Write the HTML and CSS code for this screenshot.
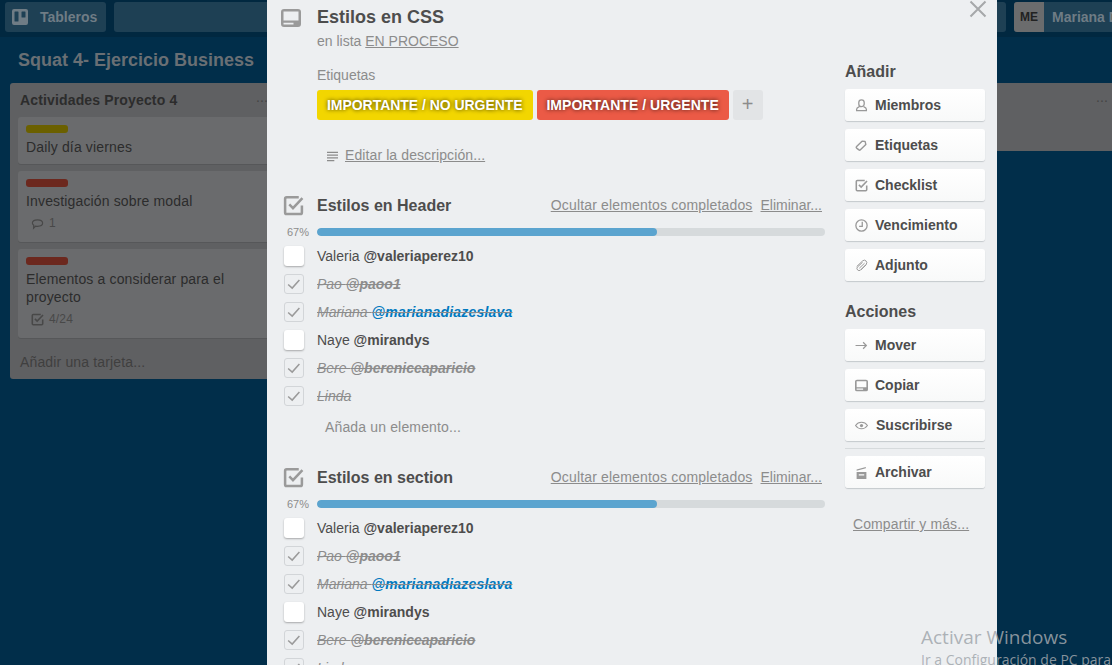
FILE: index.html
```html
<!DOCTYPE html>
<html lang="en">
<head>
    <meta charset="UTF-8">
    <meta name="viewport" content="width=device-width, initial-scale=1.0">
    <title>Estilos en CSS</title>
    <link rel="stylesheet" href="styles.css">
</head>
<body>
    <svg class="defs" width="0" height="0">
        <symbol id="i-card" viewBox="0 0 20 20">
            <path d="M3 1h14a3 3 0 0 1 3 3v12a3 3 0 0 1-3 3H3a3 3 0 0 1-3-3V4a3 3 0 0 1 3-3zm-.5 2.500v9h15v-9h-15zm0 11.300v1.700h10v-1.700h-10z" fill-rule="evenodd"/>
        </symbol>
        <symbol id="i-check" viewBox="0 0 20 20">
            <path d="M15 2.200H3.500a1.500 1.500 0 0 0-1.500 1.500v13a1.500 1.500 0 0 0 1.500 1.500h13a1.500 1.500 0 0 0 1.500-1.500V10" fill="none" stroke="currentColor" stroke-width="2.400"/>
            <path d="M6 9l3.500 3.500L18.500 3" fill="none" stroke="currentColor" stroke-width="2.400"/>
        </symbol>
        <symbol id="i-tick" viewBox="0 0 20 20">
            <path d="M3.500 10.500l4.500 4L16 5.500" fill="none" stroke="currentColor" stroke-width="1.700"/>
        </symbol>
        <symbol id="i-user" viewBox="0 0 12 12">
            <path d="M6 .8a2.500 2.500 0 0 1 2.500 2.500v1.200A2.500 2.500 0 0 1 6 7 2.500 2.500 0 0 1 3.500 4.500V3.300A2.500 2.500 0 0 1 6 .8zM4 7C2.500 7.700 1.500 8.300 1.500 9.500v1.300h9V9.500C10.500 8.300 9.500 7.700 8 7" fill="none" stroke="currentColor" stroke-width="1.200"/>
        </symbol>
        <symbol id="i-tag" viewBox="0 0 12 12">
            <path d="M1.500 7l5-5 2.800.2.700 2.800-5 5a1 1 0 0 1-1.400 0L1.500 8.400a1 1 0 0 1 0-1.400z" fill="none" stroke="currentColor" stroke-width="1.300" stroke-linejoin="round"/>
        </symbol>
        <symbol id="i-clock" viewBox="0 0 12 12">
            <circle cx="6" cy="6" r="5.200" fill="none" stroke="currentColor" stroke-width="1.200"/>
            <path d="M6.700 2.600V6.800H3.800" fill="none" stroke="currentColor" stroke-width="1.200"/>
        </symbol>
        <symbol id="i-clip" viewBox="0 0 12 12">
            <path d="M1.500 7L7 1.800a2.200 2.200 0 0 1 3.200 3.200L5 10.300A2 2 0 0 1 2.200 7.500L7 3M4 8.500l4.800-4.600M5.500 10l5-4.800" fill="none" stroke="currentColor" stroke-width=".9"/>
        </symbol>
        <symbol id="i-arrow" viewBox="0 0 12 12">
            <path d="M.5 6h10M7.500 3l3 3-3 3" fill="none" stroke="currentColor" stroke-width="1.100"/>
        </symbol>
        <symbol id="i-eye" viewBox="0 0 12 12">
            <path d="M.5 6C2 3.800 4 3 6 3s4 .8 5.500 3C10 8.200 8 9 6 9s-4-.8-5.500-3z" fill="none" stroke="currentColor" stroke-width="1"/>
            <circle cx="6" cy="6" r="1.500" fill="currentColor"/>
        </symbol>
        <symbol id="i-archive" viewBox="0 0 12 12">
            <path d="M1.500 5.500h9V12h-9zM3.500 7.500v1.200h5V7.500zM1.500 3.200L10 1v1.100L1.500 4.300z" fill-rule="evenodd"/>
        </symbol>
        <symbol id="i-desc" viewBox="0 0 14 12">
            <path d="M1 1.500h12M1 4.500h12M1 7.500h12M1 10.500h8" fill="none" stroke="currentColor" stroke-width="1.300"/>
        </symbol>
    </svg>

    <div class="page">
        <div class="topbar">
            <div class="topbtn">
                <svg class="board-ico" viewBox="0 0 16 16"><path d="M2 0h12a2 2 0 0 1 2 2v12a2 2 0 0 1-2 2H2a2 2 0 0 1-2-2V2a2 2 0 0 1 2-2zm1 2.500a.5.500 0 0 0-.5.500v9a.5.500 0 0 0 .5.500h3a.5.500 0 0 0 .5-.5V3a.5.500 0 0 0-.5-.5zm7 0a.5.500 0 0 0-.5.500v5a.5.500 0 0 0 .5.500h3a.5.500 0 0 0 .5-.5V3a.5.500 0 0 0-.5-.5z" fill-rule="evenodd"/></svg>
                Tableros
            </div>
            <div class="search"></div>
            <div class="member">
                <div class="avatar">ME</div>
                <div class="member-name">Mariana D</div>
            </div>
        </div>

        <div class="board-title">Squat 4- Ejercicio Business</div>

        <div class="lists">
            <div class="list">
                <div class="list-head"><span>Actividades Proyecto 4</span><span class="dots">...</span></div>
                <div class="card">
                    <div class="stripe yellow"></div>
                    <div>Daily día viernes</div>
                </div>
                <div class="card">
                    <div class="stripe red"></div>
                    <div>Investigación sobre modal</div>
                    <div class="badge">
                        <svg class="badge-ico" viewBox="0 0 14 14"><path d="M1.500 6.500c0-2.200 2.400-3.500 5.500-3.500s5.500 1.300 5.500 3.500S10.100 10 7 10c-.7 0-1.400-.1-2-.2L2.800 12l.2-3c-.9-.6-1.500-1.500-1.500-2.500z" fill="none" stroke="currentColor" stroke-width="1.300"/></svg>
                        1
                    </div>
                </div>
                <div class="card">
                    <div class="stripe red"></div>
                    <div>Elementos a considerar para el proyecto</div>
                    <div class="badge">
                        <svg class="badge-ico"><use href="#i-check"/></svg>
                        4/24
                    </div>
                </div>
                <div class="list-add">Añadir una tarjeta...</div>
            </div>
            <div class="list short">
                <div class="list-head"><span></span><span class="dots">...</span></div>
            </div>
        </div>
    </div>

    <div class="modal">
        <svg class="close" viewBox="0 0 18 18"><path d="M1.500 1.500l15 15M16.500 1.500l-15 15" fill="none" stroke="currentColor" stroke-width="2"/></svg>

        <div class="main">
            <div class="head-row">
                <svg class="big-ico"><use href="#i-card"/></svg>
                <h2 class="card-title">Estilos en CSS</h2>
            </div>
            <div class="in-list">en lista <u>EN PROCESO</u></div>

            <div class="labels-title">Etiquetas</div>
            <div class="labels">
                <span class="label l-yellow">IMPORTANTE / NO URGENTE</span>
                <span class="label l-red">IMPORTANTE / URGENTE</span>
                <span class="label-add">+</span>
            </div>

            <div class="edit-desc">
                <svg class="desc-ico"><use href="#i-desc"/></svg>
                <u>Editar la descripción...</u>
            </div>

            <div class="checklist">
                <div class="check-head">
                    <svg class="check-ico"><use href="#i-check"/></svg>
                    <h3>Estilos en Header</h3>
                    <u class="check-link">Ocultar elementos completados</u>
                    <u class="check-link">Eliminar...</u>
                </div>
                <div class="progress">
                    <span class="pct">67%</span>
                    <div class="bar"><div class="fill"></div></div>
                </div>
                <div class="item"><span class="box"></span><span>Valeria <b>@valeriaperez10</b></span></div>
                <div class="item done"><span class="box"><svg><use href="#i-tick"/></svg></span><span>Pao <b>@paoo1</b></span></div>
                <div class="item done"><span class="box"><svg><use href="#i-tick"/></svg></span><span>Mariana <b class="me">@marianadiazeslava</b></span></div>
                <div class="item"><span class="box"></span><span>Naye <b>@mirandys</b></span></div>
                <div class="item done"><span class="box"><svg><use href="#i-tick"/></svg></span><span>Bere <b>@bereniceaparicio</b></span></div>
                <div class="item done"><span class="box"><svg><use href="#i-tick"/></svg></span><span>Linda</span></div>
                <div class="add-item">Añada un elemento...</div>
            </div>

            <div class="checklist">
                <div class="check-head">
                    <svg class="check-ico"><use href="#i-check"/></svg>
                    <h3>Estilos en section</h3>
                    <u class="check-link">Ocultar elementos completados</u>
                    <u class="check-link">Eliminar...</u>
                </div>
                <div class="progress">
                    <span class="pct">67%</span>
                    <div class="bar"><div class="fill"></div></div>
                </div>
                <div class="item"><span class="box"></span><span>Valeria <b>@valeriaperez10</b></span></div>
                <div class="item done"><span class="box"><svg><use href="#i-tick"/></svg></span><span>Pao <b>@paoo1</b></span></div>
                <div class="item done"><span class="box"><svg><use href="#i-tick"/></svg></span><span>Mariana <b class="me">@marianadiazeslava</b></span></div>
                <div class="item"><span class="box"></span><span>Naye <b>@mirandys</b></span></div>
                <div class="item done"><span class="box"><svg><use href="#i-tick"/></svg></span><span>Bere <b>@bereniceaparicio</b></span></div>
                <div class="item done"><span class="box"><svg><use href="#i-tick"/></svg></span><span>Linda</span></div>
            </div>
        </div>

        <div class="side">
            <h4>Añadir</h4>
            <div class="btn"><svg><use href="#i-user"/></svg>Miembros</div>
            <div class="btn"><svg><use href="#i-tag"/></svg>Etiquetas</div>
            <div class="btn"><svg><use href="#i-check"/></svg>Checklist</div>
            <div class="btn"><svg><use href="#i-clock"/></svg>Vencimiento</div>
            <div class="btn"><svg><use href="#i-clip"/></svg>Adjunto</div>

            <h4 class="actions">Acciones</h4>
            <div class="btn"><svg><use href="#i-arrow"/></svg>Mover</div>
            <div class="btn"><svg><use href="#i-card"/></svg>Copiar</div>
            <div class="btn"><svg class="eye"><use href="#i-eye"/></svg>Suscribirse</div>
            <hr class="side-line">
            <div class="btn"><svg><use href="#i-archive"/></svg>Archivar</div>
            <u class="share">Compartir y más...</u>
        </div>
    </div>

    <div class="watermark">
        <div class="wm-big">Activar Windows</div>
        <div class="wm-small">Ir a Configuración de PC para activar Windows.</div>
    </div>
</body>
</html>
```

FILE: styles.css
```css
html, body {
    margin: 0;
    padding: 0;
    height: 100%;
    overflow: hidden;
}
body {
    font-family: "Liberation Sans", Arial, sans-serif;
    font-size: 14px;
    background: #012e4a;
}
.defs {
    position: absolute;
}
.page {
    height: 665px;
    overflow: hidden;
    background: #012e4a;
}

/* top bar */
.topbar {
    display: flex;
    height: 37px;
    box-sizing: border-box;
    padding: 2px 0 0 5px;
    background: #012840;
    gap: 8px;
}
.topbtn {
    flex: none;
    display: flex;
    align-items: center;
    gap: 12px;
    width: 101px;
    height: 30px;
    box-sizing: border-box;
    padding-left: 7px;
    background: #1e4054;
    border-radius: 3px;
    color: #6f7c85;
    font-weight: bold;
}
.board-ico {
    width: 16px;
    height: 16px;
    fill: #6f7c85;
}
.search {
    flex: none;
    width: 892px;
    height: 30px;
    background: #1e4054;
    border-radius: 3px;
}
.member {
    flex: none;
    display: flex;
    width: 110px;
    height: 30px;
    background: #1e4054;
    border-radius: 3px;
    overflow: hidden;
}
.avatar {
    width: 30px;
    line-height: 30px;
    text-align: center;
    background: #6b6c6d;
    color: #222;
    font-size: 12px;
    font-weight: bold;
}
.member-name {
    padding-left: 8px;
    line-height: 30px;
    color: #6f7c85;
    font-weight: bold;
    white-space: nowrap;
}

.board-title {
    margin: 11px 0 0 18px;
    height: 24px;
    line-height: 24px;
    font-size: 18px;
    font-weight: bold;
    color: #696f74;
}

/* lists */
.lists {
    display: flex;
    gap: 10px;
    margin: 11px 0 0 10px;
    align-items: flex-start;
}
.list {
    flex: none;
    width: 270px;
    box-sizing: border-box;
    padding: 0 8px;
    background: #5f6062;
    border-radius: 3px;
    color: #2c2c2c;
    letter-spacing: .15px;
}
.list.short {
    width: 830px;
    height: 68px;
}
.list-head {
    display: flex;
    justify-content: space-between;
    height: 34px;
    line-height: 34px;
    padding-left: 2px;
    font-weight: bold;
}
.dots {
    padding-right: 4px;
    line-height: 28px;
    color: #444;
    font-weight: normal;
}
.card {
    margin-bottom: 7px;
    padding: 8px 8px 8px;
    background: #6a6b6d;
    border-radius: 3px;
    box-shadow: 0 1px 0 #565759;
    line-height: 18px;
}
.stripe {
    width: 42px;
    height: 8px;
    margin-bottom: 5px;
    border-radius: 3px;
}
.stripe.yellow {
    background: #6b6000;
}
.stripe.red {
    background: #6c281e;
}
.badge {
    display: flex;
    align-items: center;
    gap: 5px;
    height: 18px;
    margin: 4px 0 2px;
    padding-left: 5px;
    font-size: 12px;
    color: #484848;
}
.badge-ico {
    width: 13px;
    height: 13px;
    color: #484848;
}
.list-add {
    height: 34px;
    line-height: 34px;
    padding-left: 2px;
    color: #3f3f3f;
}

/* modal */
.modal {
    position: absolute;
    top: 0;
    left: 267px;
    width: 730px;
    height: 665px;
    box-sizing: border-box;
    overflow: hidden;
    display: flex;
    padding: 0 12px 0 16px;
    background: #edeff1;
    color: #4d4d4d;
}
.close {
    position: absolute;
    top: 0;
    right: 10px;
    width: 18px;
    height: 18px;
    color: #a6a8aa;
}
.main {
    width: 542px;
    flex: none;
}
.side {
    width: 140px;
    margin-left: 20px;
    flex: none;
}
.head-row {
    display: flex;
    align-items: center;
    gap: 16px;
    height: 24px;
    margin-top: 5px;
}
.big-ico {
    width: 20px;
    height: 20px;
    margin-left: -2px;
    margin-top: 1px;
    fill: #9a9a9a;
}
.card-title {
    margin: 0;
    font-size: 18px;
    color: #4d4d4d;
}
.in-list {
    margin: 3px 0 0 34px;
    line-height: 18px;
    color: #8c8c8c;
}
.labels-title {
    margin: 16px 0 0 34px;
    line-height: 18px;
    color: #8c8c8c;
}
.labels {
    display: flex;
    gap: 4px;
    margin: 6px 0 0 34px;
}
.label {
    height: 30px;
    line-height: 30px;
    padding: 0 10px;
    border-radius: 3px;
    color: #fff;
    font-weight: bold;
    letter-spacing: -.04px;
    text-shadow: 0 0 4px rgba(0, 0, 0, .75);
}
.l-yellow {
    background: #f2d600;
}
.l-red {
    width: 192px;
    padding: 0;
    text-align: center;
    letter-spacing: .04px;
    background: #eb5a46;
}
.label-add {
    width: 30px;
    height: 30px;
    line-height: 28px;
    text-align: center;
    background: #e2e4e6;
    border-radius: 3px;
    color: #8c8c8c;
    font-size: 20px;
}
.edit-desc {
    display: flex;
    align-items: center;
    gap: 6px;
    height: 20px;
    margin: 25px 0 0 43px;
    color: #8c8c8c;
    letter-spacing: .1px;
}
.desc-ico {
    width: 13px;
    height: 11px;
    margin-top: 2px;
}

/* checklists */
.checklist {
    margin-top: 30px;
    height: 242px;
}
.check-head {
    display: flex;
    align-items: center;
    height: 20px;
}
.check-ico {
    width: 21px;
    height: 21px;
    margin-right: 13px;
    color: #9a9a9a;
}
.check-head h3 {
    flex: 1;
    margin: 0;
    padding-top: 1px;
    font-size: 16px;
    color: #4d4d4d;
}
.check-link {
    margin-left: 8px;
    color: #8c8c8c;
    letter-spacing: .17px;
}
.check-link + .check-link {
    margin-right: 3px;
    letter-spacing: 0;
}
.progress {
    display: flex;
    align-items: center;
    height: 16px;
    margin-top: 9px;
}
.pct {
    width: 34px;
    padding-left: 4px;
    box-sizing: border-box;
    font-size: 11px;
    color: #8c8c8c;
}
.bar {
    flex: 1;
    height: 8px;
    background: #d6dadc;
    border-radius: 4px;
    overflow: hidden;
}
.fill {
    width: 67%;
    height: 100%;
    background: #5ba4cf;
    border-radius: 4px;
}
.item {
    display: flex;
    align-items: center;
    height: 28px;
    color: #4d4d4d;
}
.progress + .item {
    margin-top: 2px;
}
.box {
    flex: none;
    width: 20px;
    height: 20px;
    margin: 0 13px 0 1px;
    box-sizing: border-box;
    background: #fff;
    border-radius: 3px;
    box-shadow: 0 1px 2px rgba(0, 0, 0, .3);
}
.box svg {
    display: block;
    width: 18px;
    height: 18px;
}
.done .box {
    background: #edeff1;
    border: 1px solid #d2d5d8;
    box-shadow: none;
    color: #9a9a9a;
}
.done {
    color: #8c8c8c;
    font-style: italic;
    text-decoration: line-through;
}
.me {
    color: #0079bf;
    letter-spacing: .2px;
}
.add-item {
    margin: 7px 0 0 42px;
    line-height: 20px;
    color: #8c8c8c;
    letter-spacing: .15px;
}

/* sidebar */
.side h4 {
    margin: 0;
    font-size: 16px;
    line-height: 20px;
    color: #4d4d4d;
    padding-top: 62px;
    padding-bottom: 7px;
}
.side h4.actions {
    padding-top: 13px;
    padding-bottom: 7px;
}
.btn {
    display: flex;
    align-items: center;
    height: 32px;
    margin-bottom: 8px;
    padding-left: 10px;
    box-sizing: border-box;
    background: linear-gradient(#fff, #f8f9f9);
    border-radius: 3px;
    box-shadow: 0 1px 1px #c4c9cc;
    font-weight: bold;
    color: #4d4d4d;
}
.btn svg {
    width: 13px;
    height: 13px;
    margin-right: 7px;
    color: #999;
    fill: #999;
}
.btn svg.eye {
    margin-right: 8px;
}
.side-line {
    margin: -1px 0 7px;
    height: 1px;
    border: 0;
    background: #d6dadc;
}
.share {
    display: inline-block;
    margin: 20px 0 0 8px;
    color: #8c8c8c;
    letter-spacing: .1px;
}

/* windows notice */
.watermark {
    position: absolute;
    top: 625px;
    left: 921px;
    width: 300px;
    font-family: "Open Sans", sans-serif;
    color: rgba(160, 166, 172, .85);
    white-space: nowrap;
}
.wm-big {
    font-size: 19px;
    line-height: 25px;
}
.wm-small {
    font-size: 14px;
    line-height: 19px;
}
```
